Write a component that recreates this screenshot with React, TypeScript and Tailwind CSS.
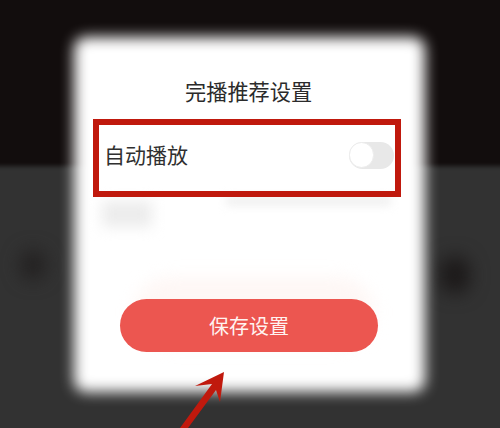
const font = { fontFamily: '"Noto Sans CJK SC", sans-serif' };

export default function App() {
  return (
    <div className="relative h-[428px] w-[500px] overflow-hidden bg-[#323232]" style={font}>
      {/* dim page behind the dialog */}
      <div className="absolute -inset-x-4 -top-4 h-[182px] bg-[#120d0d] blur-[2px]" />
      <div className="absolute left-[20px] top-[250px] h-[30px] w-[26px] rounded-full bg-[#232121] blur-[9px]" />
      <div className="absolute left-[440px] top-[256px] h-[38px] w-[30px] rounded-full bg-[#1c1919] blur-[9px]" />

      <div className="relative ml-[74px] mt-[37px] flex h-[355px] w-[351px] flex-col">
        <div className="absolute inset-0 rounded-[12px] bg-white blur-[7px]" />
        <div className="absolute left-[28px] top-[164px] h-[26px] w-[50px] bg-[#ececec] blur-[7px]" />
        <div className="absolute left-[152px] top-[160px] h-[8px] w-[165px] bg-[#ededed] blur-[5px]" />
        <div className="absolute left-[60px] top-[240px] h-[70px] w-[240px] rounded-full bg-[#fef7f5] blur-[8px]" />

        <h1 className="relative mt-[39px] ml-[111px] h-[30px] text-[21.2px] leading-[30px] font-normal text-[#2b2b2b]">
          完播推荐设置
        </h1>
        <div className="relative mt-[13px] ml-[19px] flex h-[78px] w-[308px] items-center justify-between border-[6px] border-[#c0190d] pl-[6px] pr-[2px]">
          <span className="-ml-[1px] -mt-[9px] text-[21px] leading-[30px] text-[#303030]">自动播放</span>
          <div className="-mr-[1px] -mt-[6px] flex h-[27px] w-[45px] items-center rounded-full bg-[#e8e8e8]">
            <div className="h-[26px] w-[25px] rounded-full border border-[#ececec] bg-white" />
          </div>
        </div>
        <button className="relative mt-[102px] ml-[46px] h-[53px] w-[258px] rounded-full bg-[#ec5650] text-[20px] text-[#fff3f1]">
          保存设置
        </button>
      </div>

      <svg className="absolute left-0 top-0" width="500" height="428" viewBox="0 0 500 428">
        <polygon points="224,372 195,386 212,384 180,428 188,428 216,390 220,402" fill="#c0190d" />
      </svg>
    </div>
  );
}
